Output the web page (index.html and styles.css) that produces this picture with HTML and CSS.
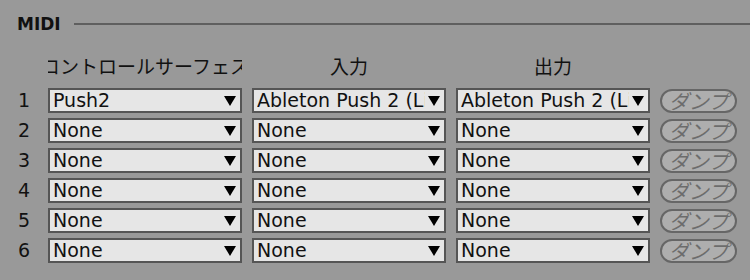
FILE: index.html
```html
<!DOCTYPE html>
<html lang="ja">
<head>
    <meta charset="UTF-8">
    <title>MIDI</title>
    <link rel="stylesheet" href="styles.css">
</head>
<body>
    <div class="section-title">
        <h2>MIDI</h2>
        <div class="rule"></div>
    </div>

    <div class="midi-grid">
        <div></div>
        <div class="col-head">コントロールサーフェス</div>
        <div class="col-head">入力</div>
        <div class="col-head">出力</div>
        <div></div>

        <div class="num">1</div>
        <div class="chooser"><span class="label">Push2</span><svg class="arrow" viewBox="0 0 12 10"><path d="M0 0H12L6 10Z"/></svg></div>
        <div class="chooser"><span class="label">Ableton Push 2 (Live Port)</span><svg class="arrow" viewBox="0 0 12 10"><path d="M0 0H12L6 10Z"/></svg></div>
        <div class="chooser"><span class="label">Ableton Push 2 (Live Port)</span><svg class="arrow" viewBox="0 0 12 10"><path d="M0 0H12L6 10Z"/></svg></div>
        <button class="dump">ダンプ</button>

        <div class="num">2</div>
        <div class="chooser"><span class="label">None</span><svg class="arrow" viewBox="0 0 12 10"><path d="M0 0H12L6 10Z"/></svg></div>
        <div class="chooser"><span class="label">None</span><svg class="arrow" viewBox="0 0 12 10"><path d="M0 0H12L6 10Z"/></svg></div>
        <div class="chooser"><span class="label">None</span><svg class="arrow" viewBox="0 0 12 10"><path d="M0 0H12L6 10Z"/></svg></div>
        <button class="dump">ダンプ</button>

        <div class="num">3</div>
        <div class="chooser"><span class="label">None</span><svg class="arrow" viewBox="0 0 12 10"><path d="M0 0H12L6 10Z"/></svg></div>
        <div class="chooser"><span class="label">None</span><svg class="arrow" viewBox="0 0 12 10"><path d="M0 0H12L6 10Z"/></svg></div>
        <div class="chooser"><span class="label">None</span><svg class="arrow" viewBox="0 0 12 10"><path d="M0 0H12L6 10Z"/></svg></div>
        <button class="dump">ダンプ</button>

        <div class="num">4</div>
        <div class="chooser"><span class="label">None</span><svg class="arrow" viewBox="0 0 12 10"><path d="M0 0H12L6 10Z"/></svg></div>
        <div class="chooser"><span class="label">None</span><svg class="arrow" viewBox="0 0 12 10"><path d="M0 0H12L6 10Z"/></svg></div>
        <div class="chooser"><span class="label">None</span><svg class="arrow" viewBox="0 0 12 10"><path d="M0 0H12L6 10Z"/></svg></div>
        <button class="dump">ダンプ</button>

        <div class="num">5</div>
        <div class="chooser"><span class="label">None</span><svg class="arrow" viewBox="0 0 12 10"><path d="M0 0H12L6 10Z"/></svg></div>
        <div class="chooser"><span class="label">None</span><svg class="arrow" viewBox="0 0 12 10"><path d="M0 0H12L6 10Z"/></svg></div>
        <div class="chooser"><span class="label">None</span><svg class="arrow" viewBox="0 0 12 10"><path d="M0 0H12L6 10Z"/></svg></div>
        <button class="dump">ダンプ</button>

        <div class="num">6</div>
        <div class="chooser"><span class="label">None</span><svg class="arrow" viewBox="0 0 12 10"><path d="M0 0H12L6 10Z"/></svg></div>
        <div class="chooser"><span class="label">None</span><svg class="arrow" viewBox="0 0 12 10"><path d="M0 0H12L6 10Z"/></svg></div>
        <div class="chooser"><span class="label">None</span><svg class="arrow" viewBox="0 0 12 10"><path d="M0 0H12L6 10Z"/></svg></div>
        <button class="dump">ダンプ</button>
    </div>
</body>
</html>
```

FILE: styles.css
```css
:root {
    --bg-color: #999999;
    --rule-color: #5f5f5f;
    --field-color: #e6e6e6;
    --border-color: #555555;
    --dump-color: #aeaeae;
}

* {
    margin: 0;
    padding: 0;
    box-sizing: border-box;
}

body {
    background-color: var(--bg-color);
    font-family: 'DejaVu Sans', 'Noto Sans CJK JP', sans-serif;
    color: #111;
    width: 750px;
    height: 280px;
    overflow: hidden;
}

.section-title {
    display: flex;
    align-items: center;
    gap: 13px;
    padding: 12px 0 0 17px;
    height: 36px;
}

.section-title h2 {
    font-size: 17px;
    font-weight: bold;
    line-height: 20px;
}

.rule {
    flex: 1;
    height: 2px;
    background-color: var(--rule-color);
}

.midi-grid {
    display: grid;
    grid-template-columns: 28px 194px 194px 194px 77px;
    grid-template-rows: 40px repeat(6, 25px);
    column-gap: 10px;
    row-gap: 5px;
    padding: 7px 0 0 10px;
    align-items: center;
}

.col-head {
    font-family: 'Noto Sans CJK JP', sans-serif;
    font-size: 19px;
    text-align: center;
    white-space: nowrap;
    overflow: hidden;
    display: flex;
    justify-content: center;
    align-self: start;
    line-height: 28px;
    padding-top: 9px;
}

.num {
    font-size: 19px;
    text-align: center;
    line-height: 25px;
}

.chooser {
    height: 25px;
    background-color: var(--field-color);
    border: 2px solid var(--border-color);
    display: flex;
    align-items: center;
    padding: 0 4px 0 3px;
    overflow: hidden;
}

.label {
    flex: 1;
    font-size: 19px;
    white-space: nowrap;
    overflow: hidden;
    line-height: 21px;
}

.arrow {
    width: 12px;
    height: 10px;
    margin-left: 3px;
    fill: #000;
    flex-shrink: 0;
}

.dump {
    height: 24px;
    background-color: var(--dump-color);
    border: 2px solid #666;
    border-radius: 12px;
    font-family: 'Noto Sans CJK JP', sans-serif;
    font-size: 20px;
    font-style: italic;
    line-height: 20px;
    color: #6c6c6c;
    cursor: pointer;
}
```
